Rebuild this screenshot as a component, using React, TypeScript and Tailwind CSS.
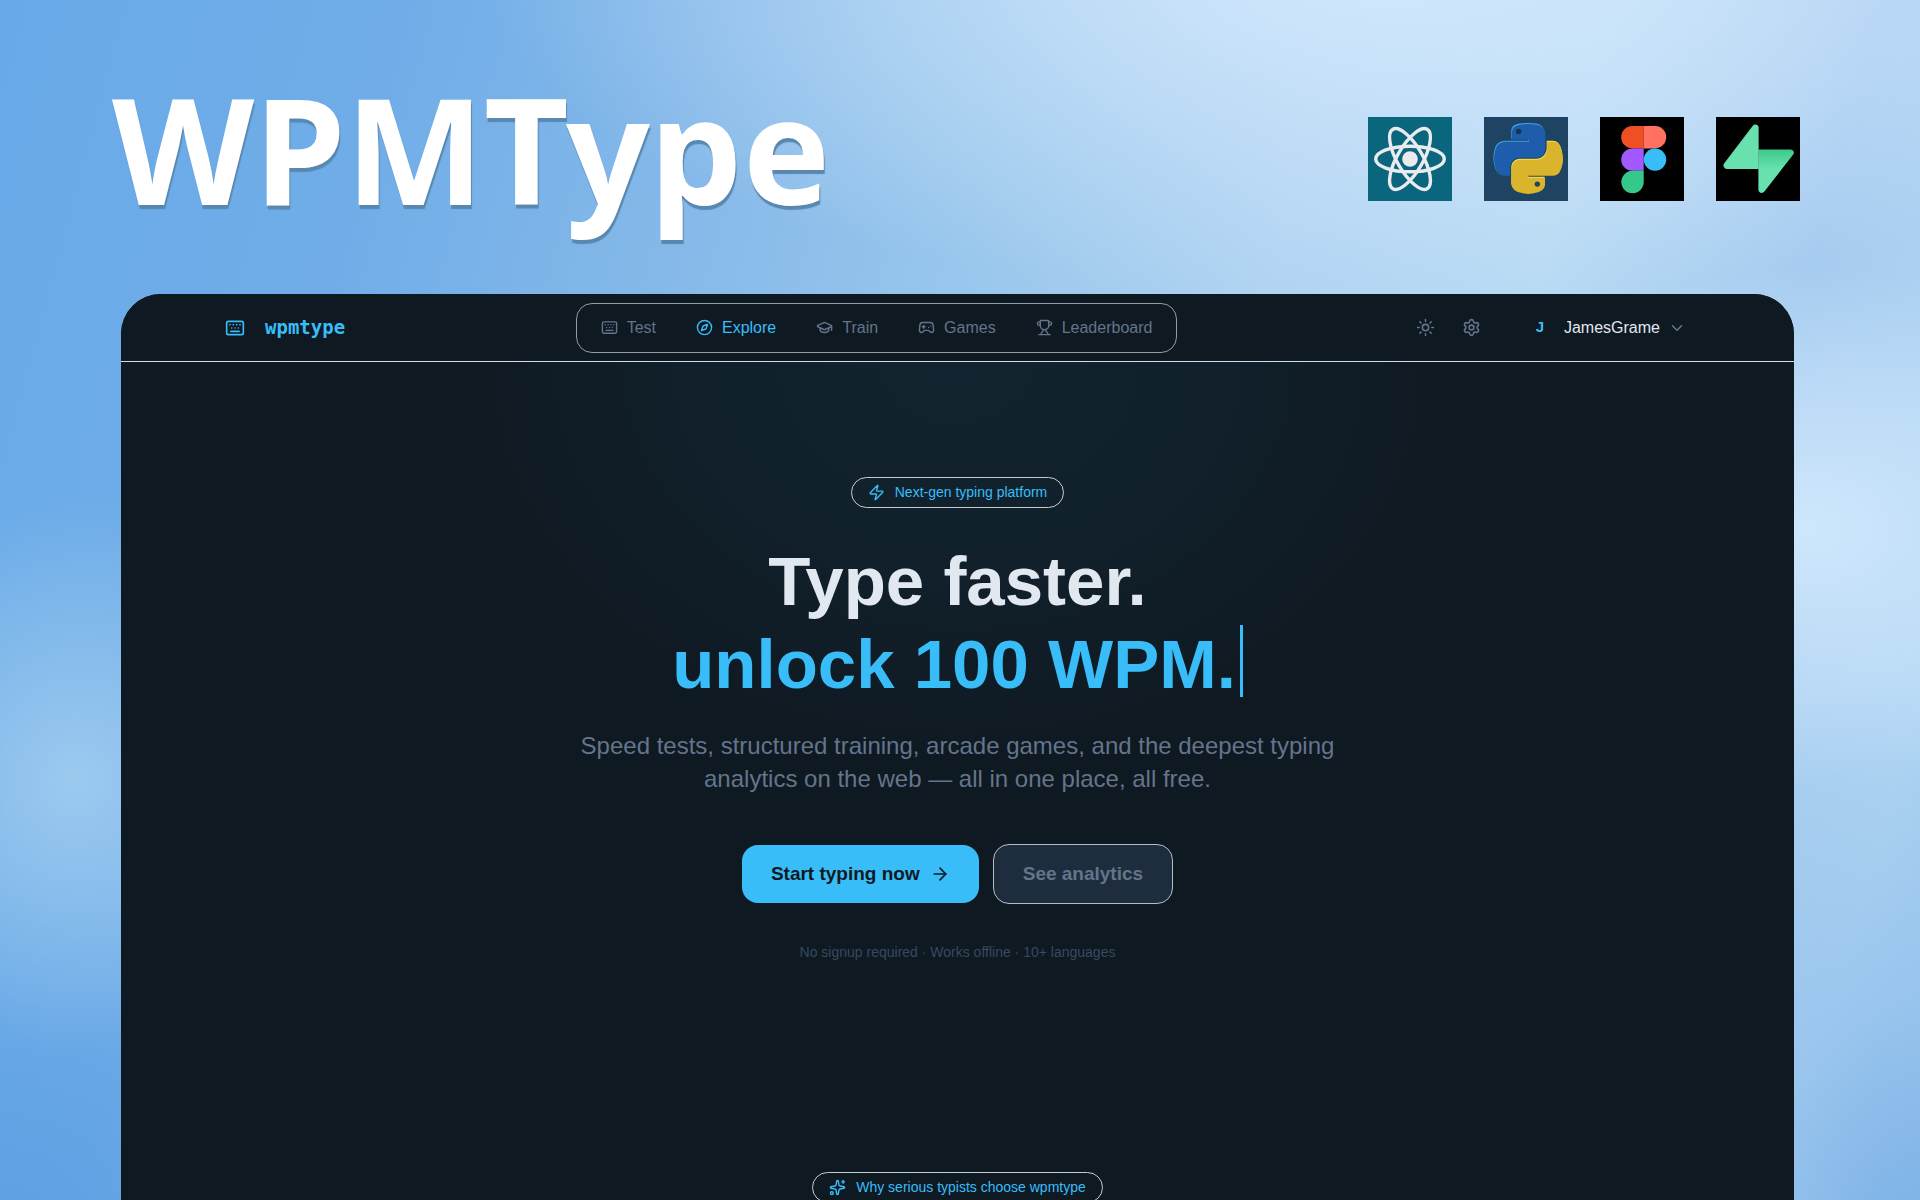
import {
  ArrowRight,
  ChevronDown,
  Compass,
  Gamepad2,
  GraduationCap,
  Keyboard,
  Settings,
  Sparkles,
  Sun,
  Trophy,
  Zap,
  type LucideIcon,
} from 'lucide-react';

interface NavItem {
  label: string;
  icon: LucideIcon;
  active?: boolean;
}

const navItems: NavItem[] = [
  { label: 'Test', icon: Keyboard },
  { label: 'Explore', icon: Compass, active: true },
  { label: 'Train', icon: GraduationCap },
  { label: 'Games', icon: Gamepad2 },
  { label: 'Leaderboard', icon: Trophy },
];

const PYTHON_BLUE =
  'M63.391 1.988c-4.222.02-8.252.379-11.8 1.007-10.45 1.846-12.346 5.71-12.346 12.837v9.411h24.693v3.137H29.977c-7.176 0-13.46 4.313-15.426 12.521-2.268 9.405-2.368 15.275 0 25.096 1.755 7.311 5.947 12.519 13.124 12.519h8.491V67.234c0-8.151 7.051-15.34 15.426-15.34h24.665c6.866 0 12.346-5.654 12.346-12.548V15.833c0-6.693-5.646-11.72-12.346-12.837-4.244-.706-8.645-1.027-12.866-1.008z';
const PYTHON_YELLOW =
  'M91.682 28.38v10.966c0 8.5-7.208 15.655-15.426 15.655H51.591c-6.756 0-12.346 5.783-12.346 12.549v23.515c0 6.691 5.818 10.628 12.346 12.547 7.816 2.297 16.221 2.713 24.665 0 6.216-1.801 12.346-5.423 12.346-12.547v-9.412H63.938v-3.138h37.012c7.176 0 9.852-5.005 12.348-12.519 2.578-7.735 2.467-15.174 0-25.096-1.774-7.145-5.161-12.521-12.348-12.521h-9.268z';

function ReactLogo() {
  return (
    <svg viewBox="0 0 84 84" className="size-21 bg-[#09667c]" role="img" aria-label="React">
      <g fill="none" stroke="#e9ebef" strokeWidth="3.4">
        <ellipse cx="42" cy="42" rx="34.3" ry="12.8" />
        <ellipse cx="42" cy="42" rx="34.3" ry="12.8" transform="rotate(60 42 42)" />
        <ellipse cx="42" cy="42" rx="34.3" ry="12.8" transform="rotate(120 42 42)" />
      </g>
      <circle cx="42" cy="42" r="7.8" fill="#e9ebef" />
    </svg>
  );
}

function PythonLogo() {
  return (
    <svg viewBox="0 0 84 84" className="size-21 bg-[#1f4362]" role="img" aria-label="Python">
      <g transform="translate(0.8 4.6) scale(0.675)">
        <path d={PYTHON_BLUE} fill="#3fa3df" />
        <path d={PYTHON_BLUE} fill="#1d5dab" transform="translate(1 1.6)" />
        <circle cx="50" cy="14.5" r="4" fill="#17354f" />
        <path d={PYTHON_YELLOW} fill="#f6e552" />
        <path d={PYTHON_YELLOW} fill="#dab42a" transform="translate(0.6 1.6)" />
        <circle cx="77.8" cy="92.6" r="4" fill="#1f4362" />
      </g>
    </svg>
  );
}

function FigmaLogo() {
  return (
    <svg viewBox="0 0 84 84" className="size-21 bg-black" role="img" aria-label="Figma">
      <path d="M43.7 9H32.4a11.2 11.2 0 0 0 0 22.4h11.3z" fill="#f04e23" />
      <path d="M43.7 9H55a11.2 11.2 0 0 1 0 22.4H43.7z" fill="#ff7262" />
      <path d="M43.7 31.4H32.4a11.2 11.2 0 0 0 0 22.4h11.3z" fill="#a259ff" />
      <circle cx="55" cy="42.6" r="11.2" fill="#38bdf8" />
      <path d="M43.7 53.8H32.4a11.2 11.2 0 1 0 11.3 11.2z" fill="#34c98b" />
    </svg>
  );
}

function SupabaseLogo() {
  return (
    <svg viewBox="0 0 84 84" className="size-21 bg-black" role="img" aria-label="Supabase">
      <defs>
        <linearGradient id="bolt" x1="0" y1="0" x2="0" y2="1">
          <stop offset="0" stopColor="#3cc98b" />
          <stop offset="0.45" stopColor="#69e1ae" />
        </linearGradient>
      </defs>
      <path d="M42.4 32.4H74.6a3.2 3.2 0 0 1 2.6 5.1L48.4 74.6c-2 2.5-6 1.4-6-2z" fill="url(#bolt)" />
      <path d="M42.6 10.5v41.5H10.8a3.4 3.4 0 0 1-2.7-5.4L36.8 8.8c2-2.5 5.8-1.4 5.8 1.7z" fill="#69e1ae" />
    </svg>
  );
}

function Badge({ icon: Icon, children }: { icon: LucideIcon; children: string }) {
  return (
    <div className="flex items-center gap-2.5 rounded-full border border-[#c3ccd6] px-4 py-1 text-sm leading-[21px] text-[#38bdf8]">
      <Icon size={17} strokeWidth={2} />
      <span>{children}</span>
    </div>
  );
}

function AppHeader() {
  return (
    <header className="flex h-17 shrink-0 items-center justify-between border-b border-[#d5dde6] bg-[#0f1922] px-26">
      <a href="#home" className="flex items-center gap-5 text-[#38bdf8]">
        <Keyboard size={20} />
        <span className="font-['DejaVu_Sans_Mono',monospace] text-[19px] font-bold">wpmtype</span>
      </a>

      <nav className="flex items-center rounded-2xl border border-[#929ca7] px-1 py-1">
        {navItems.map(({ label, icon: Icon, active }) => (
          <a
            key={label}
            href={`#${label.toLowerCase()}`}
            className={`flex h-10 items-center gap-[9px] px-5 text-base ${active ? 'text-[#38bdf8]' : 'text-[#64748b]'}`}
          >
            <Icon size={17} strokeWidth={2} />
            {label}
          </a>
        ))}
      </nav>

      <div className="flex items-center gap-2.5 text-[#64748b]">
        <button type="button" aria-label="Toggle theme" className="flex size-9 items-center justify-center">
          <Sun size={19} strokeWidth={2} />
        </button>
        <button type="button" aria-label="Settings" className="flex size-9 items-center justify-center">
          <Settings size={19} strokeWidth={2} />
        </button>
        <button type="button" className="ml-6 flex items-center gap-2 pr-1">
          <span className="w-8 text-center text-[15px] font-bold text-[#38bdf8]">J</span>
          <span className="text-base font-medium text-slate-200">JamesGrame</span>
          <ChevronDown size={18} strokeWidth={2} />
        </button>
      </div>
    </header>
  );
}

function Hero() {
  return (
    <section className="flex flex-col items-center bg-[radial-gradient(ellipse_500px_400px_at_50%_0%,#12242f_0%,#11212c_45%,#0f1922_100%)] pt-[115px] text-center">
      <Badge icon={Zap}>Next-gen typing platform</Badge>

      <h1 className="mt-8 text-[69px] leading-[83px] font-bold text-slate-200">
        Type faster.
        <span className="flex items-start text-[#38bdf8]">
          unlock 100 WPM.
          <span className="mt-0.5 ml-1 h-18 w-[3px] bg-[#38bdf8]" />
        </span>
      </h1>

      <p className="mt-[23px] max-w-[780px] text-2xl leading-[33px] text-[#64748b]">
        Speed tests, structured training, arcade games, and the deepest typing analytics on the web — all in one
        place, all free.
      </p>

      <div className="mt-[49px] flex items-center gap-3.5 text-[19px] font-bold">
        <button type="button" className="flex h-[58px] items-center gap-2.5 rounded-2xl bg-[#38bdf8] px-[29px] text-[#0f1922]">
          Start typing now
          <ArrowRight size={20} strokeWidth={2} />
        </button>
        <button type="button" className="h-15 rounded-2xl border border-[#b4bcc6] bg-[#1e2d3d] px-[29px] text-[#64748b]">
          See analytics
        </button>
      </div>

      <p className="mt-9 text-sm leading-6 text-[#364a60]">No signup required · Works offline · 10+ languages</p>
    </section>
  );
}

export default function App() {
  return (
    <div className="flex h-screen flex-col overflow-hidden bg-[#85b9e9] bg-[radial-gradient(ellipse_900px_340px_at_72%_-3%,#d2e8fcff_0%,#d2e8fc99_40%,#d2e8fc00_100%),radial-gradient(ellipse_360px_260px_at_94%_44%,#cee7fcff_0%,#cee7fc88_50%,#cee7fc00_100%),radial-gradient(ellipse_260px_280px_at_4%_65%,#9ccaefff_0%,#9ccaef00_100%),radial-gradient(ellipse_400px_600px_at_100%_106%,#78aee6ff_0%,#8abbea99_45%,#a4ccf000_100%),radial-gradient(ellipse_400px_360px_at_0%_104%,#5c9fe3ff_0%,#5c9fe300_100%),linear-gradient(105deg,#68aae8_0%,#70ade8_18%,#84b8e9_32%,#98c6ec_46%,#b0d3f2_60%,#b8daf3_72%,#a6cbf0_84%,#b2d6f3_94%,#a6cef0_100%)] font-['Liberation_Sans',Arial,sans-serif]">
      {/* Cover banner: title on the left, stack logos on the right */}
      <div className="flex h-[294px] shrink-0 items-start justify-between pr-30 pl-28">
        <span className="mt-12 font-['Noto_Sans',sans-serif] text-[147px] leading-[200px] font-bold text-white [text-shadow:1px_4px_1px_#5888b0]">
          WPMType
        </span>
        <div className="mt-[117px] flex gap-8">
          <ReactLogo />
          <PythonLogo />
          <FigmaLogo />
          <SupabaseLogo />
        </div>
      </div>

      {/* App window */}
      <main className="mr-[126px] ml-[121px] flex flex-1 flex-col overflow-hidden rounded-t-[40px] bg-[#0f1922]">
        <AppHeader />
        <Hero />
        <section className="flex shrink-0 justify-center pt-52">
          <Badge icon={Sparkles}>Why serious typists choose wpmtype</Badge>
        </section>
      </main>
    </div>
  );
}
